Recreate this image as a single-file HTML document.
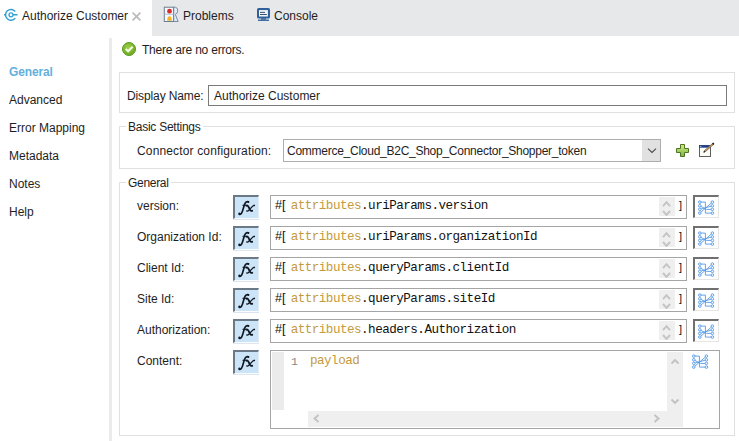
<!DOCTYPE html>
<html><head><meta charset="utf-8">
<style>
*{margin:0;padding:0;box-sizing:border-box}
html,body{width:739px;height:441px;overflow:hidden;background:#fff}
body{position:relative;font-family:"Liberation Sans",sans-serif;font-size:12px;color:#1e1e1e}
.a{position:absolute;white-space:nowrap}
.t{position:absolute;white-space:nowrap;line-height:14px}
.mono{font-family:"Liberation Mono",monospace;font-size:12.6px;letter-spacing:-0.52px;color:#111}
.grp{position:absolute;border:1px solid #e0e0e0}
.gt{position:absolute;white-space:nowrap;line-height:14px;background:#fff;padding:0 2px}
.fx{position:absolute;left:233px;width:26px;height:24px;background:#cce4f7;border-top:2px solid #6b7987;border-left:2px solid #6b7987;border-right:1px solid #e4ecf4;border-bottom:1px solid #fafcff;box-shadow:0 1px 0 #dde6ef}
.fxt{position:absolute;left:4.5px;top:1.3px;font-family:"Liberation Serif",serif;font-style:italic;font-weight:normal;font-size:16px;line-height:18px;color:#16202c;letter-spacing:1.2px;-webkit-text-stroke:0.3px #16202c}
.fld{position:absolute;left:270px;width:417px;height:24px;border:1px solid #a5a5a5;background:#fff}
.spin{position:absolute;left:659px;width:16px;height:19px;background:#efefef}
.spin svg{position:absolute;left:0;top:0}
.mapb{position:absolute;left:693px;width:26px;height:23px;border-top:2px solid #707070;border-left:2px solid #707070;border-right:1px solid #e6e6e6;border-bottom:1px solid #e6e6e6;background:#fff}
.gold{color:#c49a3e}
</style></head><body>
<!-- tab bar -->
<div class="a" style="left:152px;top:0;width:587px;height:36px;background:#e7e8e9"></div>
<svg class="a" style="left:0;top:0" width="152" height="36" viewBox="0 0 152 36">
 <path d="M15.2 11.5 A5.4 5.4 0 1 0 15.2 18.1" fill="none" stroke="#34a0d2" stroke-width="1.5"/>
 <circle cx="11" cy="14.8" r="2" fill="none" stroke="#34a0d2" stroke-width="1.3"/>
 <path d="M13 14.8 H17.5 M4 14.8 H5.5" stroke="#34a0d2" stroke-width="1.4"/>
 <path d="M132.6 12.6 L140.4 20.4 M140.4 12.6 L132.6 20.4" stroke="#bcbcbc" stroke-width="1.8"/>
</svg>
<div class="t" style="left:22px;top:9px">Authorize Customer</div>
<svg class="a" style="left:163px;top:6px" width="17" height="17" viewBox="0 0 17 17">
 <path d="M10.6 1.2 H12.4 Q14.9 1.6 14.8 5 Q14.6 7.6 12.3 8.4 L15.2 15.5 H10.6 Z" fill="#dfeaf7" stroke="#7d8ea3" stroke-width="1"/>
 <rect x="1.3" y="1.2" width="9.3" height="14.3" fill="#f5f8fc" stroke="#6d7d91" stroke-width="1"/>
 <path d="M1.3 8.2 H10.6" stroke="#a9bdd6" stroke-width="1"/>
 <circle cx="6.5" cy="5.2" r="2.4" fill="#dc2a2a"/>
 <path d="M4.2 14.8 Q4.1 10.4 6.5 10.3 Q8.9 10.4 8.8 14.8 Z" fill="#f0b429"/>
</svg>
<div class="t" style="left:183px;top:9px">Problems</div>
<svg class="a" style="left:256px;top:7px" width="16" height="16" viewBox="0 0 16 16">
 <rect x="1" y="1" width="13" height="10.5" rx="1.6" fill="#305f9b"/>
 <rect x="3" y="3.1" width="8.9" height="6.4" fill="#f2f5fa"/>
 <path d="M4 5.4 H9 M4 7.5 H10.8" stroke="#34506f" stroke-width="1"/>
 <rect x="5" y="11.3" width="5" height="1.4" fill="#305f9b"/>
 <rect x="2" y="12.6" width="11" height="1.3" fill="#305f9b"/>
</svg>
<div class="t" style="left:274px;top:9px">Console</div>

<!-- left nav -->
<div class="a" style="left:109px;top:38px;width:3px;height:403px;background:#ebebeb"></div>
<div class="t" style="left:9px;top:65px;color:#64b0dc;font-weight:bold;letter-spacing:-0.15px">General</div>
<div class="t" style="left:9px;top:93px">Advanced</div>
<div class="t" style="left:9px;top:121px">Error Mapping</div>
<div class="t" style="left:9px;top:149px">Metadata</div>
<div class="t" style="left:9px;top:177px">Notes</div>
<div class="t" style="left:9px;top:205px">Help</div>

<svg class="a" style="left:121px;top:41px" width="16" height="16" viewBox="0 0 16 16">
 <defs><radialGradient id="gc" cx="0.45" cy="0.4" r="0.6"><stop offset="0" stop-color="#9fd14c"/><stop offset="1" stop-color="#6aa823"/></radialGradient></defs>
 <circle cx="8" cy="8" r="6.5" fill="url(#gc)" stroke="#5c9a1f" stroke-width="1"/>
 <path d="M4.7 7.9 L7.1 10.3 L11.6 5.7" fill="none" stroke="#f7fae6" stroke-width="2"/>
</svg>
<div class="t" style="left:142px;top:43px;letter-spacing:-0.22px">There are no errors.</div>

<!-- group 1 -->
<div class="grp" style="left:119px;top:72px;width:616px;height:41px"></div>
<div class="t" style="left:127px;top:89px;letter-spacing:-0.12px">Display Name:</div>
<div class="a" style="left:208px;top:85px;width:519px;height:21px;border:1px solid #7a7a7a"></div>
<div class="t" style="left:214px;top:89px">Authorize Customer</div>

<!-- group 2 -->
<div class="grp" style="left:119px;top:126px;width:616px;height:43px"></div>
<div class="gt" style="left:126px;top:120px;letter-spacing:-0.25px">Basic Settings</div>
<div class="t" style="left:137px;top:144px;letter-spacing:0.15px">Connector configuration:</div>
<div class="a" style="left:283px;top:139px;width:378px;height:23px;border:1px solid #adadad;background:#fff"></div>
<div class="a" style="left:642px;top:140px;width:18px;height:21px;background:#e1e1e1"></div>
<svg class="a" style="left:642px;top:140px" width="18" height="21" viewBox="0 0 18 21"><path d="M6 8.7 L10 12.5 L14 8.7" fill="none" stroke="#4a4a4a" stroke-width="1.1"/></svg>
<div class="t" style="left:287px;top:144px;letter-spacing:-0.26px">Commerce_Cloud_B2C_Shop_Connector_Shopper_token</div>
<svg class="a" style="left:675px;top:143px" width="16" height="16" viewBox="0 0 16 16">
 <defs><linearGradient id="gp" x1="0" y1="0" x2="0" y2="1"><stop offset="0" stop-color="#d2ec84"/><stop offset="1" stop-color="#7cb640"/></linearGradient></defs>
 <path d="M5.5 1.5 H9.5 V5.5 H13.5 V9.5 H9.5 V13.5 H5.5 V9.5 H1.5 V5.5 H5.5 Z" fill="url(#gp)" stroke="#4f7426" stroke-width="1"/>
</svg>
<svg class="a" style="left:698px;top:142px" width="18" height="16" viewBox="0 0 18 16">
 <rect x="1.5" y="3.5" width="11" height="11" fill="#fdfdf8" stroke="#5e5e5e" stroke-width="1"/>
 <rect x="1" y="3.2" width="12" height="2.5" fill="#22408c"/><rect x="2.3" y="4" width="1" height="1" fill="#cfd8ee"/>
 <path d="M6.8 9.3 L15.6 1.4" stroke="#7a6444" stroke-width="2"/><path d="M7.2 8.9 L15.1 1.8" stroke="#d8b47c" stroke-width="0.9"/><path d="M14.6 2.3 L15.8 1.2" stroke="#222" stroke-width="1.8"/>
 <path d="M5.6 10.4 L7 9.1" stroke="#333" stroke-width="1.3"/>
</svg>

<!-- group 3 -->
<div class="grp" style="left:119px;top:182px;width:616px;height:254px"></div>
<div class="gt" style="left:126px;top:176px;letter-spacing:-0.3px">General</div>

<div class="t" style="left:137px;top:199px">version:</div>
<div class="fx" style="top:195px"><svg width="24" height="22" viewBox="0 0 24 22" style="position:absolute;left:0;top:0"><g fill="none" stroke="#0f1722" stroke-linecap="round"><path d="M4.2 17.2 Q5.6 17.8 6.6 16.1 Q7.6 14.4 8.6 10.4 Q9.8 5.6 11.2 4.9 Q12.2 4.3 13.5 4.7" stroke-width="1.7"/><path d="M7.9 8.3 H12.6" stroke-width="1.1"/><path d="M11.4 8.7 Q12.8 8.1 13.8 10.3 L15.1 13 Q15.9 14.3 17.2 13.8" stroke-width="1.8"/><path d="M19.4 8.4 Q18.6 8 17.2 9.6 L13.7 13.4 Q12.9 14.3 11.8 14" stroke-width="1.35"/></g><circle cx="4.4" cy="16.6" r="1" fill="#0f1722"/><circle cx="13.3" cy="5" r="0.95" fill="#0f1722"/><circle cx="19.1" cy="8.6" r="0.8" fill="#0f1722"/></svg></div>
<div class="fld" style="top:195px"></div>
<div class="t" style="left:275px;top:198px;font-size:12.6px;color:#111">#[</div>
<div class="t mono" style="left:290.7px;top:199px"><span class="gold">attributes</span>.uriParams.version</div>
<div class="spin" style="top:197px"><svg width="16" height="19" viewBox="0 0 16 19"><path d="M4 9.2 L7.5 5.2 L11 9.2 M4 14 L7.5 18 L11 14" fill="none" stroke="#c4c4c4" stroke-width="1.9"/></svg></div>
<div class="t" style="left:679px;top:197.7px;font-size:11px;color:#101010">]</div>
<div class="mapb" style="top:195px"></div>
<svg width="20" height="19" viewBox="0 0 20 19" style="position:absolute;left:696.2px;top:197.7px">
<g fill="none" stroke="#559ae8" stroke-width="0.9">
<path d="M3.8 4.1 H9.4 V15.1 H16.4"/>
<path d="M3.8 15.1 L16.4 4.1"/><path d="M3.8 7.8 L10.5 11.4 H16.4"/><path d="M3.8 11.4 L16.4 7.8"/>
<circle cx="3.8" cy="4.1" r="1.3" fill="#f2f8ff"/><circle cx="3.8" cy="7.8" r="1.3" fill="#f2f8ff"/><circle cx="3.8" cy="11.4" r="1.3" fill="#f2f8ff"/><circle cx="3.8" cy="15.1" r="1.3" fill="#f2f8ff"/>
<circle cx="16.4" cy="4.1" r="1.3" fill="#f2f8ff"/><circle cx="16.4" cy="7.8" r="1.3" fill="#f2f8ff"/><circle cx="16.4" cy="11.4" r="1.3" fill="#f2f8ff"/><circle cx="16.4" cy="15.1" r="1.3" fill="#f2f8ff"/>
</g></svg>
<div class="t" style="left:137px;top:230px">Organization Id:</div>
<div class="fx" style="top:226px"><svg width="24" height="22" viewBox="0 0 24 22" style="position:absolute;left:0;top:0"><g fill="none" stroke="#0f1722" stroke-linecap="round"><path d="M4.2 17.2 Q5.6 17.8 6.6 16.1 Q7.6 14.4 8.6 10.4 Q9.8 5.6 11.2 4.9 Q12.2 4.3 13.5 4.7" stroke-width="1.7"/><path d="M7.9 8.3 H12.6" stroke-width="1.1"/><path d="M11.4 8.7 Q12.8 8.1 13.8 10.3 L15.1 13 Q15.9 14.3 17.2 13.8" stroke-width="1.8"/><path d="M19.4 8.4 Q18.6 8 17.2 9.6 L13.7 13.4 Q12.9 14.3 11.8 14" stroke-width="1.35"/></g><circle cx="4.4" cy="16.6" r="1" fill="#0f1722"/><circle cx="13.3" cy="5" r="0.95" fill="#0f1722"/><circle cx="19.1" cy="8.6" r="0.8" fill="#0f1722"/></svg></div>
<div class="fld" style="top:226px"></div>
<div class="t" style="left:275px;top:229px;font-size:12.6px;color:#111">#[</div>
<div class="t mono" style="left:290.7px;top:230px"><span class="gold">attributes</span>.uriParams.organizationId</div>
<div class="spin" style="top:228px"><svg width="16" height="19" viewBox="0 0 16 19"><path d="M4 9.2 L7.5 5.2 L11 9.2 M4 14 L7.5 18 L11 14" fill="none" stroke="#c4c4c4" stroke-width="1.9"/></svg></div>
<div class="t" style="left:679px;top:228.7px;font-size:11px;color:#101010">]</div>
<div class="mapb" style="top:226px"></div>
<svg width="20" height="19" viewBox="0 0 20 19" style="position:absolute;left:696.2px;top:228.7px">
<g fill="none" stroke="#559ae8" stroke-width="0.9">
<path d="M3.8 4.1 H9.4 V15.1 H16.4"/>
<path d="M3.8 15.1 L16.4 4.1"/><path d="M3.8 7.8 L10.5 11.4 H16.4"/><path d="M3.8 11.4 L16.4 7.8"/>
<circle cx="3.8" cy="4.1" r="1.3" fill="#f2f8ff"/><circle cx="3.8" cy="7.8" r="1.3" fill="#f2f8ff"/><circle cx="3.8" cy="11.4" r="1.3" fill="#f2f8ff"/><circle cx="3.8" cy="15.1" r="1.3" fill="#f2f8ff"/>
<circle cx="16.4" cy="4.1" r="1.3" fill="#f2f8ff"/><circle cx="16.4" cy="7.8" r="1.3" fill="#f2f8ff"/><circle cx="16.4" cy="11.4" r="1.3" fill="#f2f8ff"/><circle cx="16.4" cy="15.1" r="1.3" fill="#f2f8ff"/>
</g></svg>
<div class="t" style="left:137px;top:261px">Client Id:</div>
<div class="fx" style="top:257px"><svg width="24" height="22" viewBox="0 0 24 22" style="position:absolute;left:0;top:0"><g fill="none" stroke="#0f1722" stroke-linecap="round"><path d="M4.2 17.2 Q5.6 17.8 6.6 16.1 Q7.6 14.4 8.6 10.4 Q9.8 5.6 11.2 4.9 Q12.2 4.3 13.5 4.7" stroke-width="1.7"/><path d="M7.9 8.3 H12.6" stroke-width="1.1"/><path d="M11.4 8.7 Q12.8 8.1 13.8 10.3 L15.1 13 Q15.9 14.3 17.2 13.8" stroke-width="1.8"/><path d="M19.4 8.4 Q18.6 8 17.2 9.6 L13.7 13.4 Q12.9 14.3 11.8 14" stroke-width="1.35"/></g><circle cx="4.4" cy="16.6" r="1" fill="#0f1722"/><circle cx="13.3" cy="5" r="0.95" fill="#0f1722"/><circle cx="19.1" cy="8.6" r="0.8" fill="#0f1722"/></svg></div>
<div class="fld" style="top:257px"></div>
<div class="t" style="left:275px;top:260px;font-size:12.6px;color:#111">#[</div>
<div class="t mono" style="left:290.7px;top:261px"><span class="gold">attributes</span>.queryParams.clientId</div>
<div class="spin" style="top:259px"><svg width="16" height="19" viewBox="0 0 16 19"><path d="M4 9.2 L7.5 5.2 L11 9.2 M4 14 L7.5 18 L11 14" fill="none" stroke="#c4c4c4" stroke-width="1.9"/></svg></div>
<div class="t" style="left:679px;top:259.7px;font-size:11px;color:#101010">]</div>
<div class="mapb" style="top:257px"></div>
<svg width="20" height="19" viewBox="0 0 20 19" style="position:absolute;left:696.2px;top:259.7px">
<g fill="none" stroke="#559ae8" stroke-width="0.9">
<path d="M3.8 4.1 H9.4 V15.1 H16.4"/>
<path d="M3.8 15.1 L16.4 4.1"/><path d="M3.8 7.8 L10.5 11.4 H16.4"/><path d="M3.8 11.4 L16.4 7.8"/>
<circle cx="3.8" cy="4.1" r="1.3" fill="#f2f8ff"/><circle cx="3.8" cy="7.8" r="1.3" fill="#f2f8ff"/><circle cx="3.8" cy="11.4" r="1.3" fill="#f2f8ff"/><circle cx="3.8" cy="15.1" r="1.3" fill="#f2f8ff"/>
<circle cx="16.4" cy="4.1" r="1.3" fill="#f2f8ff"/><circle cx="16.4" cy="7.8" r="1.3" fill="#f2f8ff"/><circle cx="16.4" cy="11.4" r="1.3" fill="#f2f8ff"/><circle cx="16.4" cy="15.1" r="1.3" fill="#f2f8ff"/>
</g></svg>
<div class="t" style="left:137px;top:292px">Site Id:</div>
<div class="fx" style="top:288px"><svg width="24" height="22" viewBox="0 0 24 22" style="position:absolute;left:0;top:0"><g fill="none" stroke="#0f1722" stroke-linecap="round"><path d="M4.2 17.2 Q5.6 17.8 6.6 16.1 Q7.6 14.4 8.6 10.4 Q9.8 5.6 11.2 4.9 Q12.2 4.3 13.5 4.7" stroke-width="1.7"/><path d="M7.9 8.3 H12.6" stroke-width="1.1"/><path d="M11.4 8.7 Q12.8 8.1 13.8 10.3 L15.1 13 Q15.9 14.3 17.2 13.8" stroke-width="1.8"/><path d="M19.4 8.4 Q18.6 8 17.2 9.6 L13.7 13.4 Q12.9 14.3 11.8 14" stroke-width="1.35"/></g><circle cx="4.4" cy="16.6" r="1" fill="#0f1722"/><circle cx="13.3" cy="5" r="0.95" fill="#0f1722"/><circle cx="19.1" cy="8.6" r="0.8" fill="#0f1722"/></svg></div>
<div class="fld" style="top:288px"></div>
<div class="t" style="left:275px;top:291px;font-size:12.6px;color:#111">#[</div>
<div class="t mono" style="left:290.7px;top:292px"><span class="gold">attributes</span>.queryParams.siteId</div>
<div class="spin" style="top:290px"><svg width="16" height="19" viewBox="0 0 16 19"><path d="M4 9.2 L7.5 5.2 L11 9.2 M4 14 L7.5 18 L11 14" fill="none" stroke="#c4c4c4" stroke-width="1.9"/></svg></div>
<div class="t" style="left:679px;top:290.7px;font-size:11px;color:#101010">]</div>
<div class="mapb" style="top:288px"></div>
<svg width="20" height="19" viewBox="0 0 20 19" style="position:absolute;left:696.2px;top:290.7px">
<g fill="none" stroke="#559ae8" stroke-width="0.9">
<path d="M3.8 4.1 H9.4 V15.1 H16.4"/>
<path d="M3.8 15.1 L16.4 4.1"/><path d="M3.8 7.8 L10.5 11.4 H16.4"/><path d="M3.8 11.4 L16.4 7.8"/>
<circle cx="3.8" cy="4.1" r="1.3" fill="#f2f8ff"/><circle cx="3.8" cy="7.8" r="1.3" fill="#f2f8ff"/><circle cx="3.8" cy="11.4" r="1.3" fill="#f2f8ff"/><circle cx="3.8" cy="15.1" r="1.3" fill="#f2f8ff"/>
<circle cx="16.4" cy="4.1" r="1.3" fill="#f2f8ff"/><circle cx="16.4" cy="7.8" r="1.3" fill="#f2f8ff"/><circle cx="16.4" cy="11.4" r="1.3" fill="#f2f8ff"/><circle cx="16.4" cy="15.1" r="1.3" fill="#f2f8ff"/>
</g></svg>
<div class="t" style="left:137px;top:323px">Authorization:</div>
<div class="fx" style="top:319px"><svg width="24" height="22" viewBox="0 0 24 22" style="position:absolute;left:0;top:0"><g fill="none" stroke="#0f1722" stroke-linecap="round"><path d="M4.2 17.2 Q5.6 17.8 6.6 16.1 Q7.6 14.4 8.6 10.4 Q9.8 5.6 11.2 4.9 Q12.2 4.3 13.5 4.7" stroke-width="1.7"/><path d="M7.9 8.3 H12.6" stroke-width="1.1"/><path d="M11.4 8.7 Q12.8 8.1 13.8 10.3 L15.1 13 Q15.9 14.3 17.2 13.8" stroke-width="1.8"/><path d="M19.4 8.4 Q18.6 8 17.2 9.6 L13.7 13.4 Q12.9 14.3 11.8 14" stroke-width="1.35"/></g><circle cx="4.4" cy="16.6" r="1" fill="#0f1722"/><circle cx="13.3" cy="5" r="0.95" fill="#0f1722"/><circle cx="19.1" cy="8.6" r="0.8" fill="#0f1722"/></svg></div>
<div class="fld" style="top:319px"></div>
<div class="t" style="left:275px;top:322px;font-size:12.6px;color:#111">#[</div>
<div class="t mono" style="left:290.7px;top:323px"><span class="gold">attributes</span>.headers.Authorization</div>
<div class="spin" style="top:321px"><svg width="16" height="19" viewBox="0 0 16 19"><path d="M4 9.2 L7.5 5.2 L11 9.2 M4 14 L7.5 18 L11 14" fill="none" stroke="#c4c4c4" stroke-width="1.9"/></svg></div>
<div class="t" style="left:679px;top:321.7px;font-size:11px;color:#101010">]</div>
<div class="mapb" style="top:319px"></div>
<svg width="20" height="19" viewBox="0 0 20 19" style="position:absolute;left:696.2px;top:321.7px">
<g fill="none" stroke="#559ae8" stroke-width="0.9">
<path d="M3.8 4.1 H9.4 V15.1 H16.4"/>
<path d="M3.8 15.1 L16.4 4.1"/><path d="M3.8 7.8 L10.5 11.4 H16.4"/><path d="M3.8 11.4 L16.4 7.8"/>
<circle cx="3.8" cy="4.1" r="1.3" fill="#f2f8ff"/><circle cx="3.8" cy="7.8" r="1.3" fill="#f2f8ff"/><circle cx="3.8" cy="11.4" r="1.3" fill="#f2f8ff"/><circle cx="3.8" cy="15.1" r="1.3" fill="#f2f8ff"/>
<circle cx="16.4" cy="4.1" r="1.3" fill="#f2f8ff"/><circle cx="16.4" cy="7.8" r="1.3" fill="#f2f8ff"/><circle cx="16.4" cy="11.4" r="1.3" fill="#f2f8ff"/><circle cx="16.4" cy="15.1" r="1.3" fill="#f2f8ff"/>
</g></svg>

<div class="t" style="left:137px;top:354px">Content:</div>
<div class="fx" style="top:350px"><svg width="24" height="22" viewBox="0 0 24 22" style="position:absolute;left:0;top:0"><g fill="none" stroke="#0f1722" stroke-linecap="round"><path d="M4.2 17.2 Q5.6 17.8 6.6 16.1 Q7.6 14.4 8.6 10.4 Q9.8 5.6 11.2 4.9 Q12.2 4.3 13.5 4.7" stroke-width="1.7"/><path d="M7.9 8.3 H12.6" stroke-width="1.1"/><path d="M11.4 8.7 Q12.8 8.1 13.8 10.3 L15.1 13 Q15.9 14.3 17.2 13.8" stroke-width="1.8"/><path d="M19.4 8.4 Q18.6 8 17.2 9.6 L13.7 13.4 Q12.9 14.3 11.8 14" stroke-width="1.35"/></g><circle cx="4.4" cy="16.6" r="1" fill="#0f1722"/><circle cx="13.3" cy="5" r="0.95" fill="#0f1722"/><circle cx="19.1" cy="8.6" r="0.8" fill="#0f1722"/></svg></div>
<div class="a" style="left:270px;top:350px;width:450px;height:79px;border:1px solid #a5a5a5;background:#fff"></div>
<div class="a" style="left:272px;top:352px;width:12px;height:58px;background:#ebebeb"></div>
<div class="t mono" style="left:291px;top:354.5px;color:#858585;font-size:11.6px;letter-spacing:0">1</div>
<div class="t mono gold" style="left:310px;top:354px">payload</div>
<div class="a" style="left:308px;top:411px;width:359px;height:16px;background:#efefef"></div>
<div class="a" style="left:667px;top:352px;width:16px;height:75px;background:#efefef"></div>
<svg class="a" style="left:270px;top:350px" width="450" height="79" viewBox="0 0 450 79">
 <path d="M48.5 65 L44.5 68.5 L48.5 72" fill="none" stroke="#c2c2c2" stroke-width="1.9"/>
 <path d="M384.5 65 L388.5 68.5 L384.5 72" fill="none" stroke="#c2c2c2" stroke-width="1.9"/>
 <path d="M401.5 13.5 L405 10 L408.5 13.5" fill="none" stroke="#c2c2c2" stroke-width="1.9"/>
 <path d="M401.5 49.5 L405 53 L408.5 49.5" fill="none" stroke="#c2c2c2" stroke-width="1.9"/>
</svg>
<svg width="20" height="19" viewBox="0 0 20 19" style="position:absolute;left:689.7px;top:352.4px">
<g fill="none" stroke="#559ae8" stroke-width="0.9">
<path d="M3.8 4.1 H9.4 V15.1 H16.4"/>
<path d="M3.8 15.1 L16.4 4.1"/><path d="M3.8 7.8 L10.5 11.4 H16.4"/><path d="M3.8 11.4 L16.4 7.8"/>
<circle cx="3.8" cy="4.1" r="1.3" fill="#f2f8ff"/><circle cx="3.8" cy="7.8" r="1.3" fill="#f2f8ff"/><circle cx="3.8" cy="11.4" r="1.3" fill="#f2f8ff"/><circle cx="3.8" cy="15.1" r="1.3" fill="#f2f8ff"/>
<circle cx="16.4" cy="4.1" r="1.3" fill="#f2f8ff"/><circle cx="16.4" cy="7.8" r="1.3" fill="#f2f8ff"/><circle cx="16.4" cy="11.4" r="1.3" fill="#f2f8ff"/><circle cx="16.4" cy="15.1" r="1.3" fill="#f2f8ff"/>
</g></svg>
</body></html>
